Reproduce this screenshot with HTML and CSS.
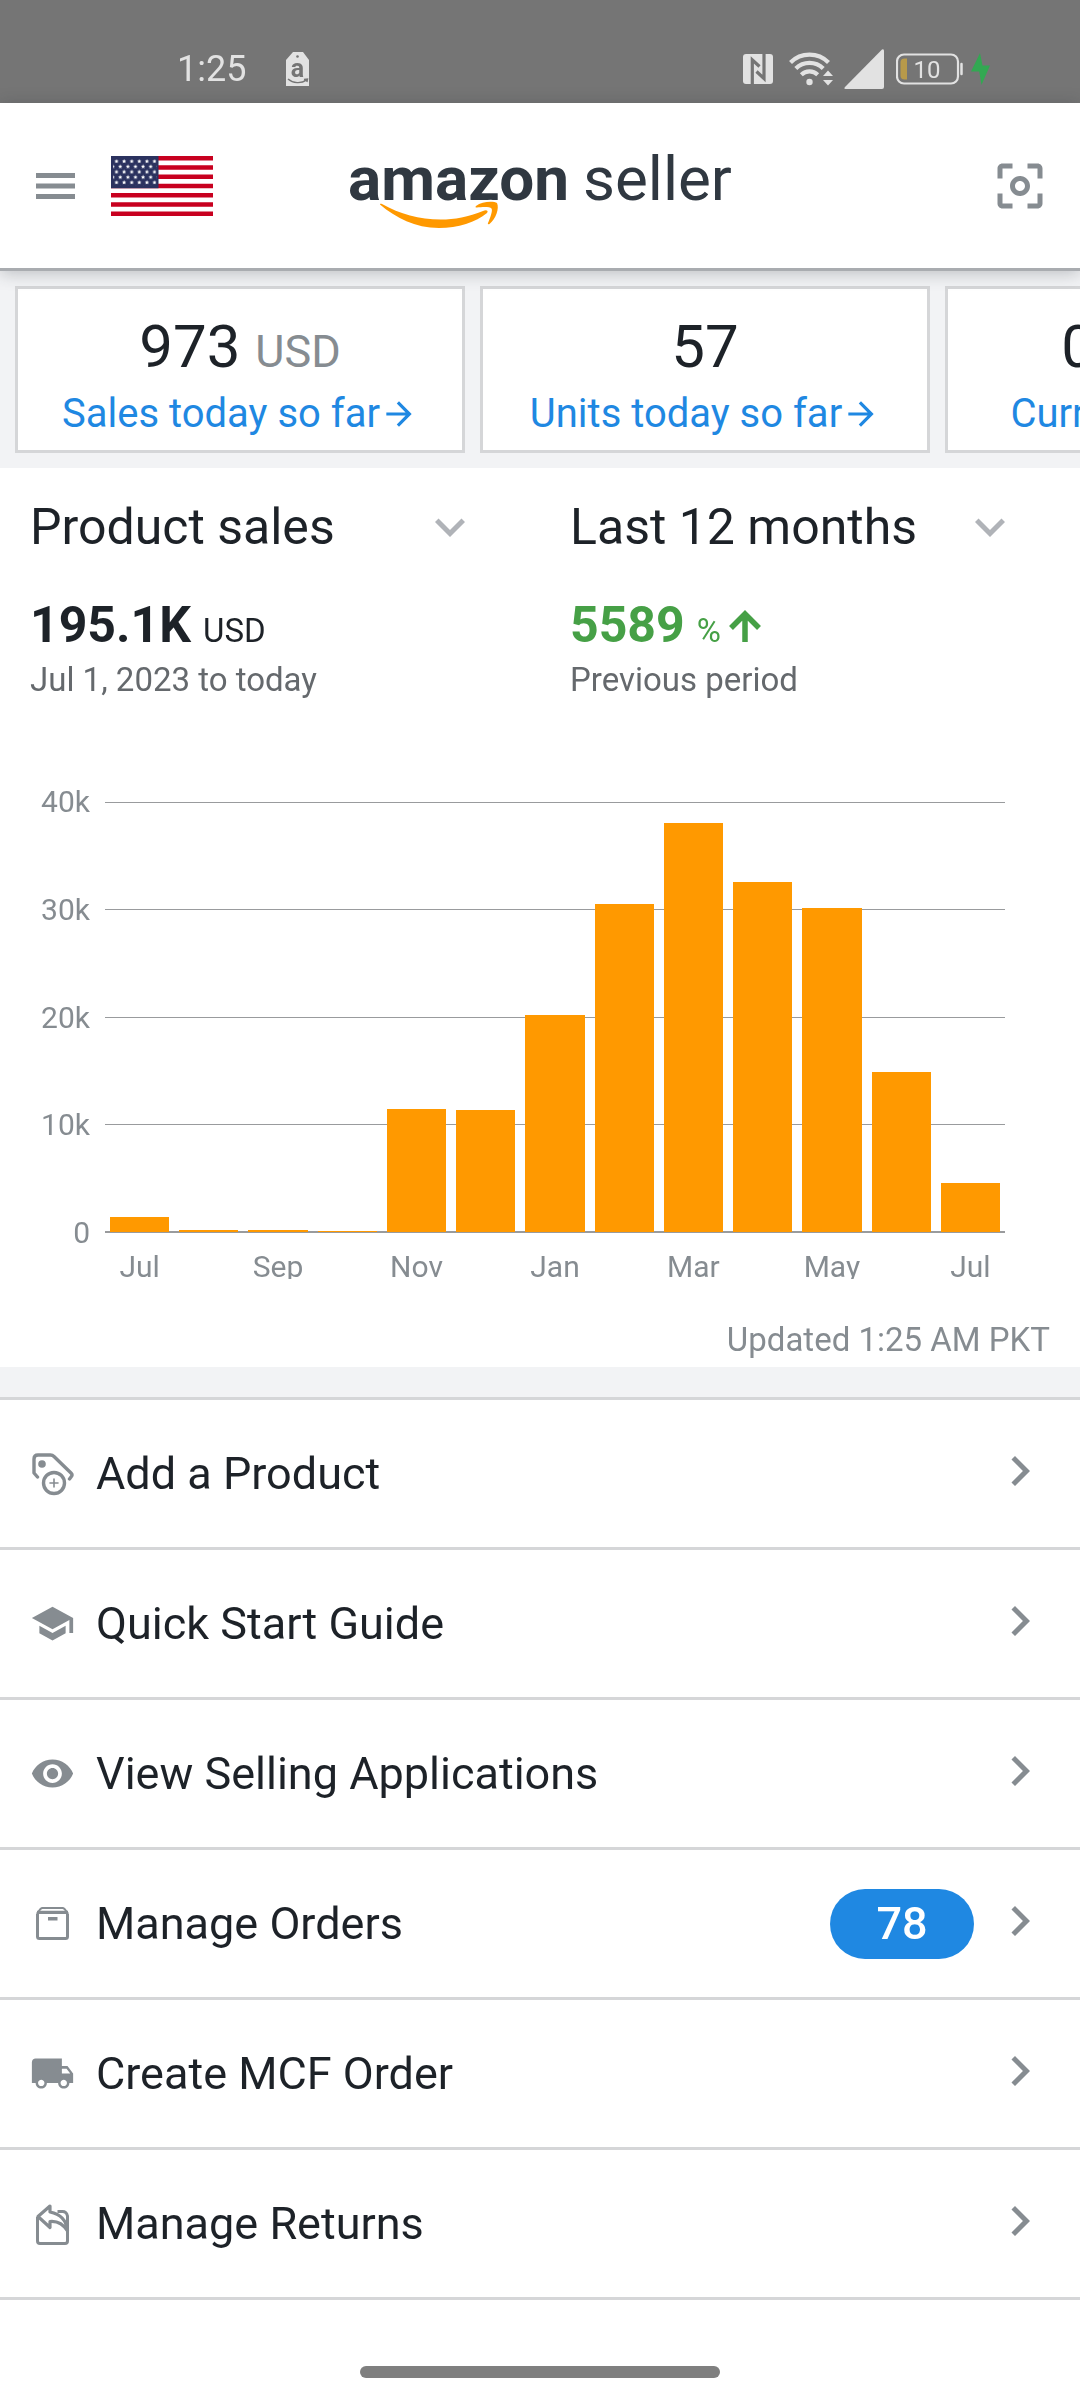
FILE: index.html
```html
<!DOCTYPE html>
<html lang="en">
<head>
<meta charset="utf-8">
<meta name="viewport" content="width=device-width, initial-scale=1">
<title>Amazon Seller</title>
<link rel="stylesheet" href="styles.css">
</head>
<body>
<svg class="sprite" aria-hidden="true">
  <symbol id="chevron-right" viewBox="0 0 24 24"><path d="M8.59 16.59L13.17 12 8.59 7.41 10 6l6 6-6 6z"/></symbol>
  <symbol id="chevron-down" viewBox="0 0 24 24"><path d="M16.59 8.59L12 13.17 7.41 8.59 6 10l6 6 6-6z"/></symbol>
  <symbol id="arrow-right" viewBox="0 0 24 24"><path d="M12 4l-1.41 1.41L16.17 11H4v2h12.170l-5.580 5.590L12 20l8-8z"/></symbol>
</svg>

<div class="status-bar">
  <div class="status-left">
    <span class="clock">1:25</span>
    <svg class="tag-app" viewBox="0 0 24 34" width="24" height="34" aria-hidden="true">
      <path fill="#e2e2e2" d="M7 0h10l6 8v26H0V8z"/>
      <circle cx="11.500" cy="4.500" r="1.300" fill="#757575"/>
      <text class="tag-letter" x="11.500" y="25" text-anchor="middle">a</text>
      <path d="M2 27c5 4.500 13 4.800 18.500 1.200M18 27.500l3.500-.5-.6 3" fill="none" stroke="#757575" stroke-width="1.400"/>
    </svg>
  </div>
  <div class="status-right">
    <svg viewBox="0 0 30 30" width="30" height="30" aria-label="NFC">
      <rect width="30" height="30" rx="3" fill="#e2e2e2"/>
      <path d="M9.300 30V5.800l7.200 6.700M21 0v24.500l-7.500-7" fill="none" stroke="#757575" stroke-width="3.200"/>
    </svg>
    <svg class="wifi" viewBox="0 0 45 35" width="45" height="35" aria-label="Wi-Fi">
      <g fill="none" stroke="#e2e2e2" stroke-width="4.200">
        <path d="M1.500 11.500a27 27 0 0 1 38 0"/>
        <path d="M6.800 17.500a19.500 19.500 0 0 1 27.400 0"/>
        <path d="M12.300 23.700a12 12 0 0 1 16.400 0"/>
      </g>
      <circle cx="20.500" cy="31" r="3.200" fill="#e2e2e2"/>
      <path fill="#e2e2e2" d="M34 25l5-5.500L44 25zM34 29l5 5.500L44 29z"/>
    </svg>
    <svg viewBox="0 0 40 40" width="40" height="40" aria-label="Signal">
      <path fill="#e2e2e2" d="M38 .5Q40-.5 40 2v36q0 2-2 2H1.500Q-.5 40 1 38z"/>
    </svg>
    <svg class="battery" viewBox="0 0 67 32" width="67" height="32" aria-label="Battery">
      <rect x="1" y="1.500" width="61" height="29" rx="7" fill="none" stroke="#e2e2e2" stroke-width="2.200"/>
      <path d="M65.500 11v10" stroke="#e2e2e2" stroke-width="2.500" stroke-linecap="round"/>
      <path d="M11 5.500v21H8.500q-4 0-4-4v-13q0-4 4-4z" fill="#b89a4a"/>
      <text class="battery-level" x="31" y="25" text-anchor="middle">10</text>
    </svg>
    <svg viewBox="0 0 19 32" width="19" height="32" aria-label="Charging">
      <path fill="#32a852" d="M9 0L0 18.500h8.200L10.500 32 19 12.500h-7.500z"/>
    </svg>
  </div>
</div>

<header class="app-header">
  <div class="header-left">
    <button class="icon-button menu-button" type="button" aria-label="Menu">
      <svg viewBox="0 0 39 26" width="39" height="26"><path fill="#868c91" d="M0 0h39v5H0zM0 10.500h39v5H0zM0 21h39v5H0z"/></svg>
    </button>
    <svg class="flag" viewBox="0 0 102 60" width="102" height="60" role="img" aria-label="United States">
      <defs>
        <pattern id="stars" width="7.600" height="10.600" x="3.500" y="3" patternUnits="userSpaceOnUse">
          <path id="star" fill="#fff" d="M2 0l.6 1.500 1.500.1-1.100 1 .4 1.500L2 3.300.6 4.100 1 2.600-.1 1.600l1.500-.1z"/>
          <use href="#star" x="3.800" y="5.300"/>
        </pattern>
      </defs>
      <path fill="#fff" d="M0 0h102v60H0z"/>
      <path d="M0 2.300h102M0 11.540h102M0 20.770h102M0 30h102M0 39.230h102M0 48.460h102M0 57.700h102" stroke="#c8001f" stroke-width="4.600"/>
      <path fill="#2b325f" d="M0 0h47.500v32.300H0z"/>
      <path fill="url(#stars)" d="M2 2h43.500v27.500H2z"/>
    </svg>
  </div>
  <div class="logo">
    <span class="logo-amazon">amazon</span>
    <span class="logo-seller">seller</span>
    <svg class="logo-smile" viewBox="0 0 118 26" width="118" height="26" aria-hidden="true">
      <path stroke="#fff" stroke-width="4" fill="#fff" d="M96 4C102-1 114-1 117 1c2.500 5-1 16-7.500 21-1.500.5-2 0-1.500-1z"/>
      <path fill="#f90" d="M0 2.500C16 16 35 26 59 26c19 0 37-6 48-15 2-2.500-1-3.500-4-2-14 6-29 8.500-42 8.500C39 17.500 20 12 2 2 1 1.500-.5 1.500 0 2.500z"/>
      <path fill="#f90" d="M96 4C102-1 114-1 117 1c2.500 5-1 16-7.500 21-1.500.5-2 0-1.500-1 2-4.500 5-12.500 3.500-14.500S102 5 97 5.500c-1.500 0-2-.5-1-1.500z"/>
    </svg>
  </div>
  <div class="header-right">
    <button class="icon-button" type="button" aria-label="Scan">
      <svg viewBox="0 0 24 24" width="60" height="60"><path fill="#868c91" d="M5 15H3v4c0 1.100.9 2 2 2h4v-2H5v-4zM5 5h4V3H5c-1.100 0-2 .9-2 2v4h2V5zm14-2h-4v2h4v4h2V5c0-1.100-.9-2-2-2zm0 16h-4v2h4c1.100 0 2-.9 2-2v-4h-2v4zM12 8c-2.210 0-4 1.790-4 4s1.790 4 4 4 4-1.790 4-4-1.790-4-4-4zm0 6c-1.100 0-2-.9-2-2s.9-2 2-2 2 .9 2 2-.9 2-2 2z"/></svg>
    </button>
  </div>
</header>

<main>
  <section class="stat-strip" aria-label="Today">
    <a class="stat-card" href="#sales">
      <span class="stat-value">973 <span class="stat-unit">USD</span></span>
      <span class="stat-label">Sales today so far<svg width="38" height="38"><use href="#arrow-right"/></svg></span>
    </a>
    <a class="stat-card" href="#units">
      <span class="stat-value">57</span>
      <span class="stat-label">Units today so far<svg width="38" height="38"><use href="#arrow-right"/></svg></span>
    </a>
    <a class="stat-card" href="#balance">
      <span class="stat-value">0.00 <span class="stat-unit">USD</span></span>
      <span class="stat-label">Current balance<svg width="38" height="38"><use href="#arrow-right"/></svg></span>
    </a>
  </section>

  <section class="sales-panel">
    <div class="columns">
      <div class="picker">
        <select aria-label="Metric"><option>Product sales</option></select>
        <svg width="60" height="60" aria-hidden="true"><use href="#chevron-down"/></svg>
      </div>
      <div class="picker">
        <select aria-label="Period"><option>Last 12 months</option></select>
        <svg width="60" height="60" aria-hidden="true"><use href="#chevron-down"/></svg>
      </div>
    </div>
    <div class="columns totals">
      <div class="total">
        <p class="total-value"><strong>195.1K</strong><span>USD</span></p>
        <p class="total-note">Jul 1, 2023 to today</p>
      </div>
      <div class="total">
        <p class="total-value growth"><strong>5589</strong><span>%</span><svg viewBox="0 0 32 32" width="32" height="32" aria-label="up"><path d="M16 32V4M2 18L16 4l14 14" fill="none" stroke="#46a046" stroke-width="5.500"/></svg></p>
        <p class="total-note">Previous period</p>
      </div>
    </div>

    <div class="chart" role="img" aria-label="Product sales by month">
      <ul class="y-axis"><li>40k</li><li>30k</li><li>20k</li><li>10k</li><li>0</li></ul>
      <div class="plot">
        <div class="grid-lines"><i></i><i></i><i></i><i></i><i></i></div>
        <div class="bars">
          <div class="bar" style="height:3.500%"></div>
          <div class="bar" style="height:.4%"></div>
          <div class="bar" style="height:.4%"></div>
          <div class="bar" style="height:.2%"></div>
          <div class="bar" style="height:28.700%"></div>
          <div class="bar" style="height:28.300%"></div>
          <div class="bar" style="height:50.400%"></div>
          <div class="bar" style="height:76.300%"></div>
          <div class="bar" style="height:95.200%"></div>
          <div class="bar" style="height:81.400%"></div>
          <div class="bar" style="height:75.400%"></div>
          <div class="bar" style="height:37.100%"></div>
          <div class="bar" style="height:11.500%"></div>
        </div>
      </div>
      <ul class="x-axis"><li>Jul</li><li></li><li>Sep</li><li></li><li>Nov</li><li></li><li>Jan</li><li></li><li>Mar</li><li></li><li>May</li><li></li><li>Jul</li></ul>
    </div>
    <p class="updated">Updated 1:25 AM PKT</p>
  </section>

  <nav class="menu-list">
    <a class="menu-row" href="#add">
      <svg class="menu-icon" viewBox="0 0 45 45" width="45" height="45" aria-hidden="true">
        <g fill="none" stroke="#868c91" stroke-width="3.400" stroke-linecap="round">
          <path d="M7.500 26L4 22V8q0-4 4-4h12.500q2 0 3.500 1.500L41 22q2 2 0 4l-1.500 2" stroke-linejoin="round"/>
          <circle cx="24" cy="32" r="10.500"/>
          <path d="M24 28v8M20 32h8" stroke-width="1.600"/>
        </g>
        <circle cx="12" cy="13" r="3.800" fill="#868c91"/>
      </svg>
      <span class="menu-label">Add a Product</span>
      <svg class="menu-chevron" width="60" height="60" aria-hidden="true"><use href="#chevron-right"/></svg>
    </a>
    <a class="menu-row" href="#guide">
      <svg class="menu-icon" viewBox="0 0 24 24" width="45" height="45" aria-hidden="true"><path fill="#868c91" d="M5 13.180v4L12 21l7-3.820v-4L12 17l-7-3.820zM12 3L1 9l11 6 9-4.910V17h2V9L12 3z"/></svg>
      <span class="menu-label">Quick Start Guide</span>
      <svg class="menu-chevron" width="60" height="60" aria-hidden="true"><use href="#chevron-right"/></svg>
    </a>
    <a class="menu-row" href="#applications">
      <svg class="menu-icon" viewBox="0 0 24 24" width="45" height="45" aria-hidden="true"><path fill="#868c91" d="M12 4.500C7 4.500 2.730 7.610 1 12c1.730 4.390 6 7.500 11 7.500s9.270-3.110 11-7.500c-1.730-4.390-6-7.500-11-7.500zM12 17c-2.760 0-5-2.240-5-5s2.240-5 5-5 5 2.240 5 5-2.240 5-5 5zm0-8c-1.660 0-3 1.340-3 3s1.340 3 3 3 3-1.340 3-3-1.340-3-3-3z"/></svg>
      <span class="menu-label">View Selling Applications</span>
      <svg class="menu-chevron" width="60" height="60" aria-hidden="true"><use href="#chevron-right"/></svg>
    </a>
    <a class="menu-row" href="#orders">
      <svg class="menu-icon" viewBox="0 0 45 45" width="45" height="45" aria-hidden="true">
        <path d="M7.500 12.500v23q0 2 2 2h26q2 0 2-2v-23" fill="none" stroke="#868c91" stroke-width="3"/>
        <path d="M7 12.500l3.500-4.500q1-1 2-1h20q1 0 2 1l3.500 4.500" fill="none" stroke="#868c91" stroke-width="2"/>
        <path fill="#868c91" d="M7 9.800h31v3.200H7zM18 16h9.500v3.500H18z"/>
      </svg>
      <span class="menu-label">Manage Orders</span>
      <span class="count">78</span>
      <svg class="menu-chevron" width="60" height="60" aria-hidden="true"><use href="#chevron-right"/></svg>
    </a>
    <a class="menu-row" href="#mcf">
      <svg class="menu-icon" viewBox="0 0 24 24" width="45" height="45" aria-hidden="true"><path fill="#868c91" d="M20 8h-3V4H3c-1.100 0-2 .9-2 2v11h2c0 1.660 1.340 3 3 3s3-1.340 3-3h6c0 1.660 1.340 3 3 3s3-1.340 3-3h2v-5l-3-4zM6 18.700c-.94 0-1.700-.76-1.700-1.700s.76-1.700 1.700-1.700 1.700.76 1.700 1.700-.76 1.700-1.700 1.700zm13.500-9.200l1.960 2.500H17V9.500h2.500zM18 18.700c-.94 0-1.700-.76-1.700-1.700s.76-1.700 1.700-1.700 1.700.76 1.700 1.700-.76 1.700-1.700 1.700z"/></svg>
      <span class="menu-label">Create MCF Order</span>
      <svg class="menu-chevron" width="60" height="60" aria-hidden="true"><use href="#chevron-right"/></svg>
    </a>
    <a class="menu-row" href="#returns">
      <svg class="menu-icon" viewBox="0 0 45 45" width="45" height="45" aria-hidden="true">
        <path d="M7.500 16v24q0 2.500 2.500 2.500h25q2.500 0 2.500-2.500V15q-1-4.500-5-4.500h-5" fill="none" stroke="#868c91" stroke-width="3"/>
        <path d="M20 5L8 15.500l12 11v-6q11-1 17.500 9.500Q36 14 20 11z" fill="#fff" stroke="#868c91" stroke-width="3.200" stroke-linejoin="round"/>
      </svg>
      <span class="menu-label">Manage Returns</span>
      <svg class="menu-chevron" width="60" height="60" aria-hidden="true"><use href="#chevron-right"/></svg>
    </a>
  </nav>
</main>

<footer class="home-area"><div class="home-bar"></div></footer>
</body>
</html>
```
FILE: styles.css
```css
:root {
  --ink: #1d2228;
  --muted: #868c91;
  --line: #d5d6d8;
  --band: #f2f3f5;
  --blue: #1f88e2;
}

* { box-sizing: border-box; }

body {
  margin: 0;
  background: #fff;
  color: var(--ink);
  font-family: Roboto, "Noto Sans", sans-serif;
  font-weight: 400;
}

p, ul { margin: 0; padding: 0; }
li { list-style: none; }
a { color: inherit; text-decoration: none; }
svg { display: block; flex: none; }
.sprite { display: none; }

/* Status bar */
.status-bar {
  display: flex;
  justify-content: space-between;
  align-items: center;
  height: 103px;
  padding: 34px 90px 0 177px;
  background: #757575;
  color: #e2e2e2;
}
.status-left { display: flex; align-items: center; gap: 40px; }
.status-right { display: flex; align-items: center; gap: 12px; }
.clock { font-size: 36px; line-height: 40px; }
.wifi { margin-left: 4px; margin-right: -2px; }
.battery { margin-right: -4px; }
.tag-letter { font: 700 25px Roboto, sans-serif; fill: #757575; }
.battery-level { font-size: 24px; fill: #e2e2e2; }

/* Header */
.app-header {
  position: relative;
  z-index: 1;
  display: grid;
  grid-template-columns: 1fr auto 1fr;
  align-items: center;
  height: 168px;
  padding: 0 30px;
  background: #fff;
  border-bottom: 3px solid #a9acb0;
  box-shadow: 0 2px 16px rgba(40, 45, 55, .28);
}
.header-left { display: flex; align-items: center; gap: 30px; }
.header-right { display: flex; justify-content: flex-end; }
.icon-button { padding: 0; border: 0; background: none; }
.menu-button { padding: 17px 6px; }
.logo {
  position: relative;
  display: flex;
  align-items: baseline;
  gap: 14px;
  padding-bottom: 14px;
  color: #303841;
  font-size: 62px;
  line-height: 80px;
}
.logo-amazon { font-weight: 700; }
.logo-smile { position: absolute; left: 32px; top: 63px; overflow: visible; }

/* Today cards */
.stat-strip {
  display: flex;
  gap: 15px;
  padding: 15px;
  overflow-x: auto;
  scrollbar-width: none;
  background: var(--band);
}
.stat-card {
  flex: 0 0 450px;
  display: flex;
  flex-direction: column;
  align-items: center;
  gap: 8px;
  padding: 22px 0 13px;
  border: 3px solid var(--line);
  background: #fff;
}
.stat-value { font-size: 60px; line-height: 72px; }
.stat-unit { font-size: 45px; line-height: 46px; color: var(--muted); }
.stat-label {
  display: flex;
  align-items: center;
  color: var(--blue);
  fill: var(--blue);
  font-size: 40px;
  line-height: 46px;
}

/* Sales panel */
.sales-panel { padding: 29px 0 7px; }
.columns { display: grid; grid-template-columns: 1fr 1fr; }
.picker { display: grid; grid-template-columns: 1fr 60px; padding: 0 60px 0 30px; }
.picker select {
  grid-area: 1 / 1 / 2 / 3;
  height: 60px;
  padding: 0;
  border: 0;
  appearance: none;
  background: none;
  color: inherit;
  font: inherit;
  font-size: 50px;
  line-height: 60px;
}
.picker svg { grid-area: 1 / 2; fill: #b0b3b8; pointer-events: none; }
.totals { margin-top: 38px; }
.total { padding-left: 30px; }
.total-value {
  display: flex;
  align-items: baseline;
  height: 63px;
  font-size: 33px;
  line-height: 40px;
}
.total-value strong { margin-right: 12px; font-size: 50px; line-height: 60px; }
.total-value svg { margin-left: 8px; }
.growth { color: #46a046; }
.total-note { color: #65696d; font-size: 33px; line-height: 44px; }

/* Chart */
.chart {
  display: grid;
  grid-template-columns: 60px 1fr;
  column-gap: 15px;
  margin: 85px 75px 0 30px;
  color: var(--muted);
  font-size: 30px;
}
.y-axis {
  display: flex;
  flex-direction: column;
  justify-content: space-between;
  height: 461px;
  line-height: 30px;
  text-align: right;
}
.plot { display: grid; margin: 15px 0; }
.grid-lines, .bars { grid-area: 1 / 1; }
.grid-lines { display: flex; flex-direction: column; justify-content: space-between; }
.grid-lines i { height: 1px; background: #999b9d; }
.grid-lines i:last-child { height: 2px; }
.bars, .x-axis { display: grid; grid-template-columns: repeat(13, 1fr); }
.bars { align-items: end; padding-bottom: 1px; }
.bar { margin: 0 5px; background: #f90; }
.x-axis {
  grid-column: 2;
  height: 31px;
  overflow: hidden;
  line-height: 38px;
  text-align: center;
}
.updated {
  margin: 41px 30px 0 0;
  color: var(--muted);
  font-size: 33px;
  line-height: 40px;
  text-align: right;
}

/* Menu */
.menu-list { border-top: 30px solid var(--band); }
.menu-list::before { content: ""; display: block; height: 3px; background: var(--line); }
.menu-row {
  display: flex;
  align-items: center;
  height: 150px;
  padding: 0 30px;
  border-bottom: 3px solid var(--line);
}
.menu-label { flex: 1; margin-left: 21px; font-size: 45px; line-height: 54px; }
.menu-chevron { fill: var(--muted); margin-bottom: 6px; }
.count {
  width: 144px;
  margin-right: 16px;
  border-radius: 35px;
  background: var(--blue);
  color: #fff;
  font-size: 45px;
  font-weight: 500;
  line-height: 70px;
  text-align: center;
}

/* Home indicator */
.home-area { padding: 66px 0 20px; }
.home-bar { width: 33.333%; height: 12px; margin: 0 auto; border-radius: 6px; background: #7f7f7f; }
```
